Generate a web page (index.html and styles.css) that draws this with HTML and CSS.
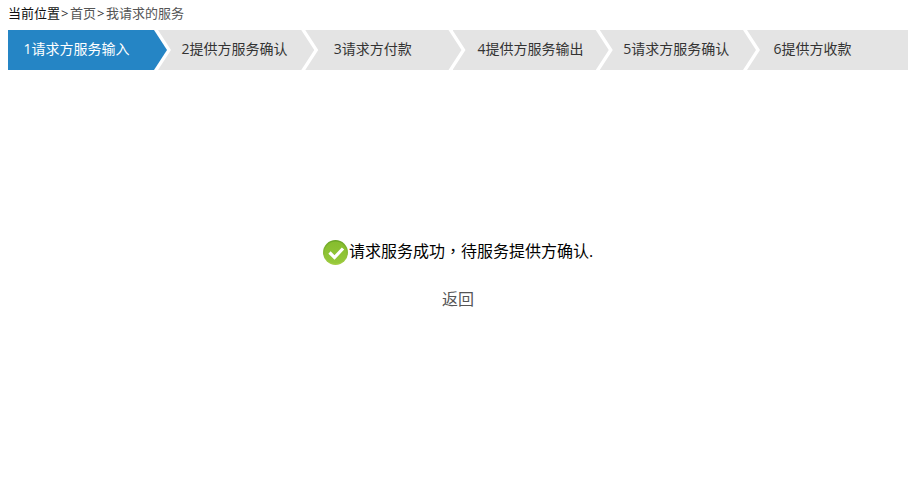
FILE: index.html
```html
<!DOCTYPE html>
<html lang="zh-CN">
<head>
  <meta charset="UTF-8">
  <meta name="viewport" content="width=device-width, initial-scale=1.0">
  <title>请求服务</title>
  <link rel="stylesheet" href="styles.css">
</head>
<body>

  <!-- breadcrumb -->
  <div class="crumbs">
    <span class="crumbs-here">当前位置</span><span class="crumbs-sep">&gt;</span><a href="#">首页</a><span class="crumbs-sep">&gt;</span><a href="#">我请求的服务</a>
  </div>

  <!-- steps -->
  <ul class="steps">
    <li class="step active">1请求方服务输入</li>
    <li class="step">2提供方服务确认</li>
    <li class="step">3请求方付款</li>
    <li class="step">4提供方服务输出</li>
    <li class="step">5请求方服务确认</li>
    <li class="step">6提供方收款</li>
  </ul>

  <!-- result -->
  <div class="result">
    <div class="result-msg">
      <svg class="result-icon" width="25" height="25" viewBox="0 0 25 25" aria-hidden="true">
        <defs>
          <linearGradient id="okRim" x1="0" y1="0" x2="0" y2="1">
            <stop offset="0" stop-color="#6aa524"/>
            <stop offset="1" stop-color="#a5cf45"/>
          </linearGradient>
          <linearGradient id="okFill" x1="0" y1="0" x2="0" y2="1">
            <stop offset="0" stop-color="#86bd2e"/>
            <stop offset="1" stop-color="#96c93a"/>
          </linearGradient>
        </defs>
        <circle cx="12.5" cy="12.5" r="12.5" fill="url(#okRim)"/>
        <circle cx="12.5" cy="12.5" r="11" fill="url(#okFill)"/>
        <path d="M6.5 12.5l5 5 8.5-9" fill="none" stroke="#fff" stroke-width="3.2"/>
      </svg>
      <span class="result-text">请求服务成功<span class="result-comma" lang="zh-TW">，</span>待服务提供方确认.</span>
    </div>
    <a class="result-back" href="#">返回</a>
  </div>

</body>
</html>
```

FILE: styles.css
```css
body { margin: 0; padding: 0 1px 0 8px; font-family: "Open Sans", "Noto Sans CJK SC", sans-serif; color: #333; background: #fff; }
a { color: #555; text-decoration: none; }

.crumbs { height: 30px; line-height: 26px; font-size: 13px; color: #555; }
.crumbs-here { color: #111; }
.crumbs-sep { margin: 0 1.5px 0 1px; color: #333; }

.steps { display: flex; height: 40px; margin: 0; padding: 0; list-style: none; }
.step {
  flex: 0 0 156.25px;
  margin-right: -9px;
  padding-left: 23.5px;
  box-sizing: border-box;
  line-height: 38px;
  font-size: 14px;
  color: #333;
  background: #e4e4e4;
  clip-path: polygon(0 0, calc(100% - 13px) 0, 100% 50%, calc(100% - 13px) 100%, 0 100%, 13px 50%);
}
.step:nth-child(3) { padding-left: 28.5px; }
.step:nth-child(4) { padding-left: 25px; }
.step:nth-child(6) { padding-left: 26.5px; flex: 1; margin-right: 0; clip-path: polygon(0 0, 100% 0, 100% 100%, 0 100%, 13px 50%); }
.step.active { flex-basis: 159px; padding-left: 15.5px; color: #fff; background: #2585c5; clip-path: polygon(0 0, calc(100% - 13px) 0, 100% 50%, calc(100% - 13px) 100%, 0 100%); }

.result { padding-top: 168px; text-align: center; font-size: 16px; }
.result-msg { display: flex; justify-content: center; align-items: center; height: 28px; margin: 0 0 20px; color: #000; }
.result-icon { flex: none; margin-right: 1px; }
.result-text { padding-bottom: 5px; }
.result-comma { font-family: "Noto Sans CJK TC", sans-serif; }
.result-back { display: block; line-height: 26px; }
```
